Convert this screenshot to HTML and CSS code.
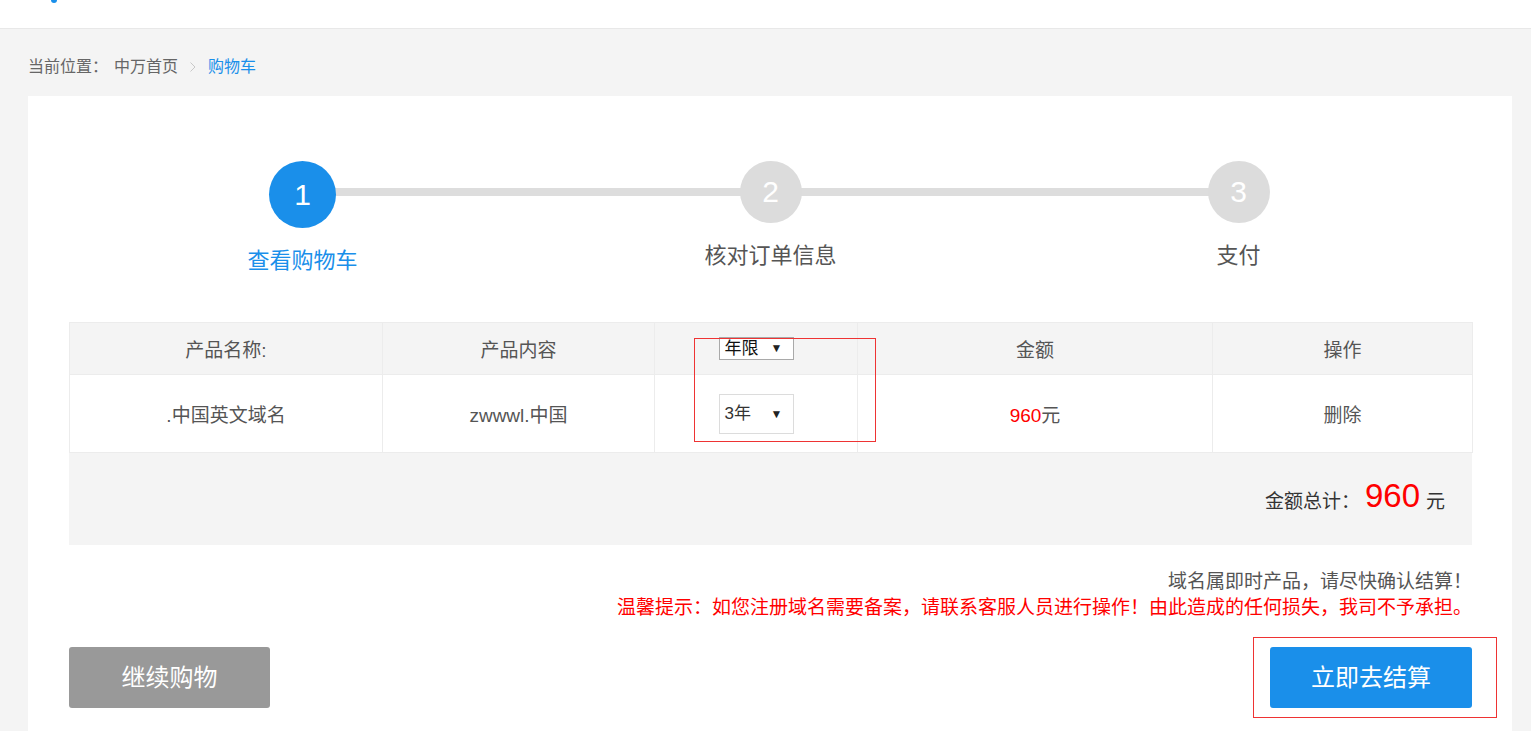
FILE: index.html
```html
<!DOCTYPE html>
<html lang="zh-CN">
<head>
    <meta charset="UTF-8">
    <meta name="viewport" content="width=device-width, initial-scale=1.0">
    <title>购物车 - 中万</title>
    <link rel="stylesheet" href="styles.css">
</head>
<body>
    <div class="topbar">
        <span class="logo-tip"></span>
    </div>
    <div class="main">
        <div class="crumb">
            <span>当前位置：</span>
            <a href="#" class="crumb-home">中万首页</a>
            <svg class="crumb-sep" width="6" height="10" viewBox="0 0 6 10"><polyline points="0.5,0.5 5,5 0.5,9.5" fill="none" stroke="#c8c8c8" stroke-width="1"/></svg>
            <a href="#" class="crumb-cur">购物车</a>
        </div>
        <div class="panel">
            <!-- 步骤条 -->
            <div class="steps">
                <div class="step active">
                    <div class="step-num">1</div>
                    <div class="step-name">查看购物车</div>
                </div>
                <div class="step">
                    <div class="step-num">2</div>
                    <div class="step-name">核对订单信息</div>
                </div>
                <div class="step">
                    <div class="step-num">3</div>
                    <div class="step-name">支付</div>
                </div>
            </div>
            <!-- 购物车列表 -->
            <table class="cart">
                <colgroup>
                    <col style="width: 313px">
                    <col style="width: 272px">
                    <col style="width: 203px">
                    <col style="width: 355px">
                    <col style="width: 260px">
                </colgroup>
                <thead>
                    <tr>
                        <th>产品名称:</th>
                        <th>产品内容</th>
                        <th class="col-year">
                            <span class="fake-select head-select">年限<i>▼</i></span>
                            <span class="mark mark-year"></span>
                        </th>
                        <th>金额</th>
                        <th>操作</th>
                    </tr>
                </thead>
                <tbody>
                    <tr>
                        <td>.中国英文域名</td>
                        <td>zwwwl.中国</td>
                        <td><span class="fake-select body-select">3年<i>▼</i></span></td>
                        <td><span class="price">960</span>元</td>
                        <td><a href="#" class="del">删除</a></td>
                    </tr>
                </tbody>
            </table>
            <div class="total">
                <span>金额总计：</span>
                <span class="total-num">960</span>
                <span>元</span>
            </div>
            <div class="notes">
                <p>域名属即时产品，请尽快确认结算！</p>
                <p class="warn">温馨提示：如您注册域名需要备案，请联系客服人员进行操作！由此造成的任何损失，我司不予承担。</p>
            </div>
            <div class="actions">
                <a href="#" class="btn btn-gray">继续购物</a>
                <div class="pay-wrap">
                    <a href="#" class="btn btn-blue">立即去结算</a>
                    <span class="mark mark-pay"></span>
                </div>
            </div>
        </div>
    </div>
</body>
</html>
```

FILE: styles.css
```css
body {
    margin: 0;
    padding: 0;
    background-color: #f4f4f4;
    font-family: "Liberation Sans", "Noto Sans CJK SC", sans-serif;
    color: #555;
}
a {
    text-decoration: none;
    color: inherit;
}
p {
    margin: 0;
}
.topbar {
    height: 28px;
    background-color: white;
    border-bottom: 1px solid #e8e8e8;
}
.logo-tip {
    display: block;
    width: 6px;
    height: 3px;
    margin-left: 51px;
    background-color: #1a8fea;
    border-radius: 0 0 3px 3px;
}
.main {
    padding: 0 19px 0 28px;
}
.crumb {
    display: flex;
    align-items: center;
    height: 20px;
    margin-top: 28px;
    margin-bottom: 19px;
    font-size: 16px;
    line-height: 20px;
    color: #666;
}
.crumb-home {
    margin-left: 6px;
}
.crumb-sep {
    margin: 0 12px;
}
.crumb-cur {
    color: #1a8fea;
}
.panel {
    background-color: white;
    padding: 65px 40px 40px 41px;
}
.steps {
    position: relative;
    display: grid;
    grid-template-columns: repeat(3, 468px);
    justify-content: center;
    align-items: start;
}
.steps::before {
    content: "";
    position: absolute;
    left: 234px;
    right: 234px;
    top: 27px;
    height: 8px;
    background-color: #dddddd;
}
.step {
    position: relative;
    display: flex;
    flex-direction: column;
    align-items: center;
}
.step-num {
    width: 62px;
    height: 62px;
    border-radius: 50%;
    background-color: #dcdcdc;
    color: white;
    font-size: 30px;
    line-height: 62px;
    text-align: center;
}
.step-name {
    margin-top: 18px;
    font-size: 22px;
    line-height: 30px;
    color: #555;
}
.step.active .step-num {
    width: 67px;
    height: 67px;
    line-height: 67px;
    background-color: #1a8fea;
}
.step.active .step-name {
    color: #1a8fea;
}
.cart {
    width: 1403px;
    margin-top: 46px;
    border-collapse: collapse;
    table-layout: fixed;
    font-size: 19px;
}
.cart th, .cart td {
    border: 1px solid #ececec;
    text-align: center;
    font-weight: normal;
    color: #555;
    padding: 0;
}
.cart th {
    height: 51px;
    background-color: #f4f4f4;
}
.cart td {
    height: 77px;
}
.col-year {
    position: relative;
}
.fake-select {
    display: inline-flex;
    align-items: center;
    justify-content: space-between;
    box-sizing: border-box;
    width: 75px;
    padding: 0 10px 0 5px;
    background-color: white;
    font-size: 17px;
    vertical-align: middle;
}
.fake-select i {
    font-style: normal;
    font-size: 12px;
    color: #222;
}
.head-select {
    height: 23px;
    border: 1px solid #a9a9a9;
    color: #111;
    line-height: 21px;
}
.body-select {
    height: 40px;
    border: 1px solid #dcdcdc;
    color: #333;
    line-height: 38px;
}
.price {
    color: red;
}
.mark {
    position: absolute;
    border: 1px solid #ee3333;
    pointer-events: none;
}
.mark-year {
    left: 39px;
    top: 15px;
    width: 180px;
    height: 102px;
}
.total {
    display: flex;
    justify-content: flex-end;
    align-items: center;
    height: 92px;
    padding-right: 27px;
    background-color: #f4f4f4;
    font-size: 19px;
    color: #333;
}
.total-num {
    margin: -6px 6px 0 5px;
    font-size: 33px;
    color: red;
}
.notes {
    margin-top: 24px;
    text-align: right;
    font-size: 19px;
    line-height: 26px;
    color: #555;
}
.notes .warn {
    color: red;
}
.actions {
    display: flex;
    justify-content: space-between;
    align-items: center;
    margin-top: 26px;
}
.btn {
    display: block;
    width: 202px;
    height: 61px;
    line-height: 61px;
    text-align: center;
    border-radius: 3px;
    font-size: 24px;
    color: white;
}
.btn-gray {
    width: 201px;
    background-color: #999999;
}
.btn-blue {
    background-color: #1a8fea;
}
.pay-wrap {
    position: relative;
}
.mark-pay {
    left: -17px;
    top: -10px;
    width: 242px;
    height: 79px;
}
```
